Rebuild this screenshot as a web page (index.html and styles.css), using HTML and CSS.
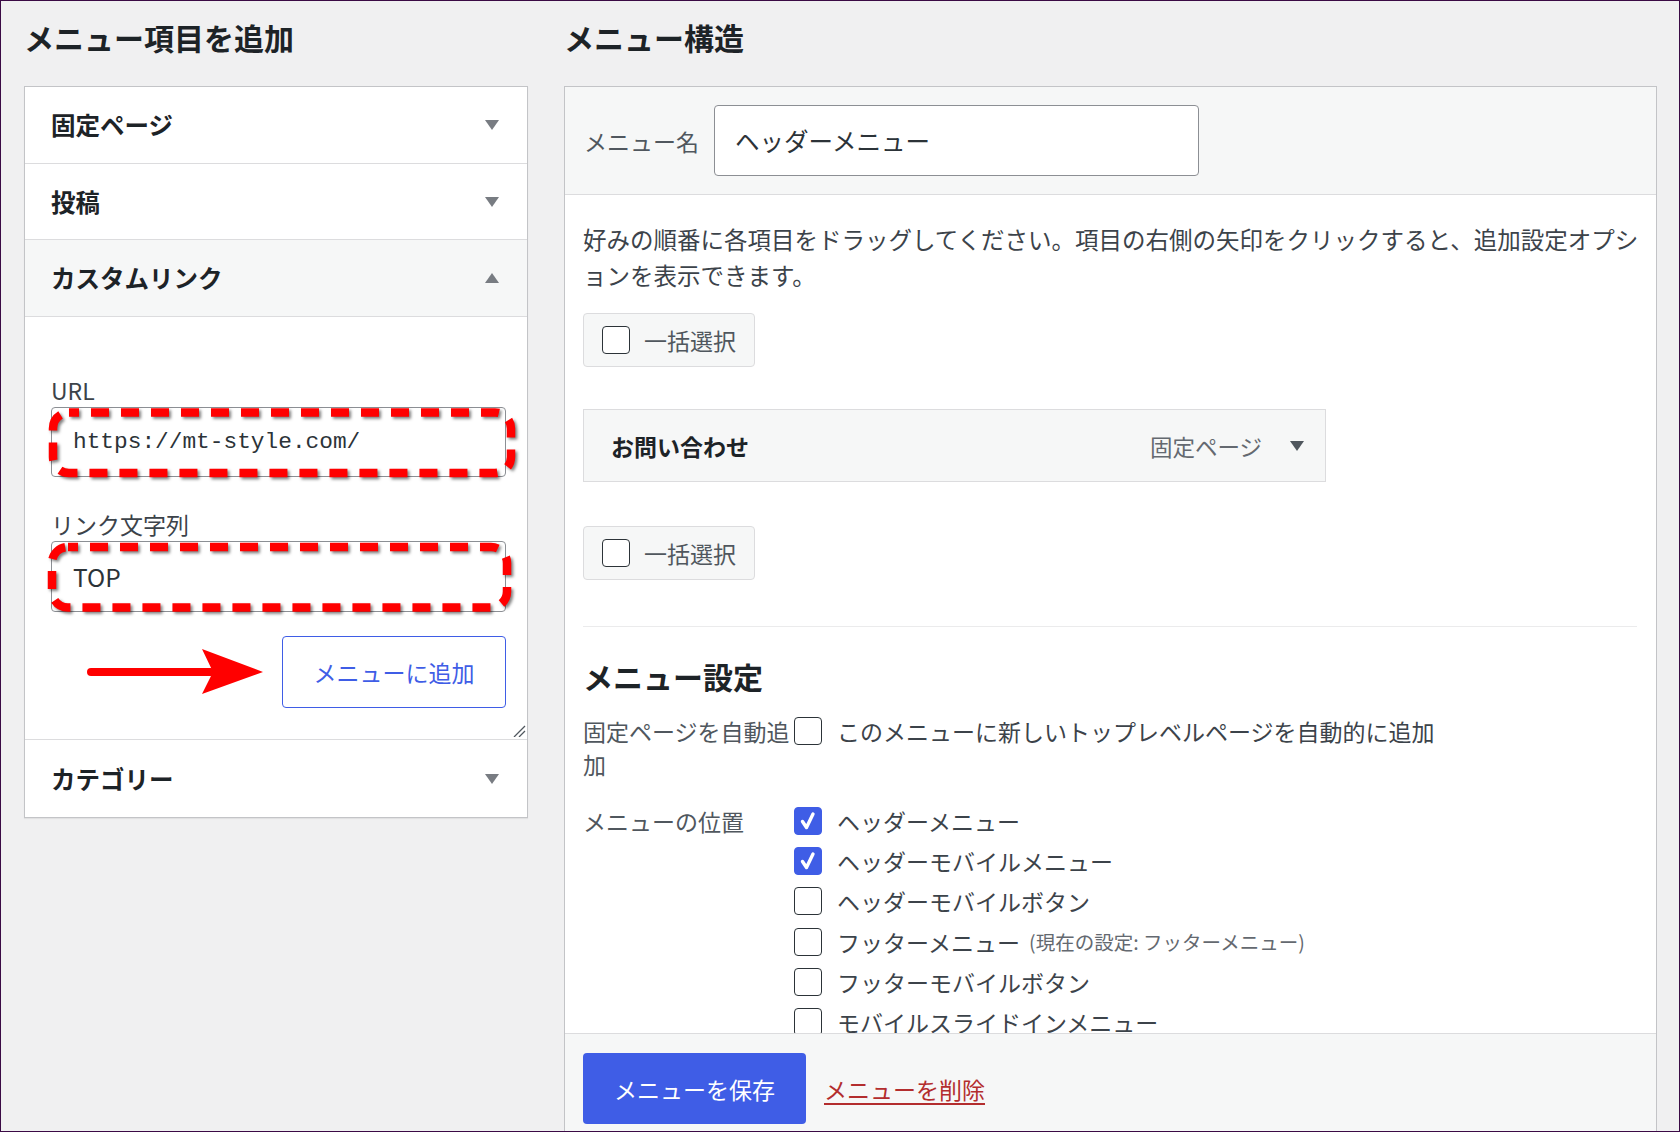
FILE: index.html
```html
<!DOCTYPE html>
<html lang="ja">
<head>
<meta charset="utf-8">
<title>メニュー</title>
<link rel="stylesheet" href="styles.css">
</head>
<body>
<div class="screen">
  <section class="col">
    <h2 class="col-title">メニュー項目を追加</h2>
    <div class="accordion">
      <div class="acc-row r1"><h3>固定ページ</h3><svg class="tri" width="14" height="10" viewBox="0 0 14 10"><path d="M0 0H14L7 10Z"/></svg></div>
      <div class="acc-row r2"><h3>投稿</h3><svg class="tri" width="14" height="10" viewBox="0 0 14 10"><path d="M0 0H14L7 10Z"/></svg></div>
      <div class="acc-row r3 open"><h3>カスタムリンク</h3><svg class="tri" width="14" height="10" viewBox="0 0 14 10"><path d="M0 10H14L7 0Z"/></svg></div>
      <div class="acc-body">
        <div class="field-label">URL</div>
        <div class="field mono">https://mt-style.com/
          <svg class="mark mark-url" width="472" height="80" viewBox="0 0 472 80"><rect x="5" y="5.5" width="458" height="60.5" rx="16" ry="16"/></svg>
        </div>
        <div class="field-label gap">リンク文字列</div>
        <div class="field tall">TOP
          <svg class="mark mark-top" width="472" height="80" viewBox="0 0 472 80"><rect x="4" y="6" width="455" height="60.5" rx="16" ry="16"/></svg>
        </div>
        <div class="add-row">
          <svg class="arrow" width="180" height="46" viewBox="0 0 180 46"><line x1="6" y1="23" x2="126" y2="23"/><path d="M117 0L178 23L117 45L128 23Z"/></svg>
          <div class="add-btn">メニューに追加</div>
        </div>
        <svg class="grip" width="14" height="12" viewBox="0 0 14 12"><path d="M13 1L2 12M13 6L7 12"/></svg>
      </div>
      <div class="acc-row r4"><h3>カテゴリー</h3><svg class="tri" width="14" height="10" viewBox="0 0 14 10"><path d="M0 0H14L7 10Z"/></svg></div>
    </div>
  </section>

  <section class="col">
    <h2 class="col-title">メニュー構造</h2>
    <div class="menu-panel">
      <div class="menu-head">
        <span class="name-label">メニュー名</span>
        <div class="name-input">ヘッダーメニュー</div>
      </div>
      <div class="menu-body">
        <p class="desc"><span class="nw">好みの順番に各項目をドラッグしてください。項目の右側の矢印をクリックすると、追加設定オプシ</span><br>ョンを表示できます。</p>
        <div class="bulk"><span class="cb"></span>一括選択</div>
        <div class="menu-item">
          <span class="item-title">お問い合わせ</span>
          <span class="item-type">固定ページ</span>
          <svg class="tri dark" width="14" height="10" viewBox="0 0 14 10"><path d="M0 0H14L7 10Z"/></svg>
        </div>
        <div class="bulk second"><span class="cb"></span>一括選択</div>
        <div class="sep"></div>
        <h3 class="settings-title">メニュー設定</h3>
        <div class="setting-row">
          <div class="set-label">固定ページを自動追加</div>
          <div class="options">
            <div class="opt"><span class="cb"></span>このメニューに新しいトップレベルページを自動的に追加</div>
          </div>
        </div>
        <div class="setting-row loc">
          <div class="set-label">メニューの位置</div>
          <div class="options">
            <div class="opt"><span class="cb checked"><svg width="26" height="26" viewBox="0 0 26 26"><path d="M7.5 13.5L11.5 19.5L18 6"/></svg></span>ヘッダーメニュー</div>
            <div class="opt"><span class="cb checked"><svg width="26" height="26" viewBox="0 0 26 26"><path d="M7.5 13.5L11.5 19.5L18 6"/></svg></span>ヘッダーモバイルメニュー</div>
            <div class="opt"><span class="cb"></span>ヘッダーモバイルボタン</div>
            <div class="opt"><span class="cb"></span>フッターメニュー<span class="current">(現在の設定: フッターメニュー)</span></div>
            <div class="opt"><span class="cb"></span>フッターモバイルボタン</div>
            <div class="opt"><span class="cb"></span>モバイルスライドインメニュー</div>
          </div>
        </div>
      </div>
      <div class="menu-foot">
        <div class="save-btn">メニューを保存</div>
        <a class="del-link" href="#">メニューを削除</a>
      </div>
    </div>
  </section>
</div>
</body>
</html>
```
FILE: styles.css
```css
* { box-sizing: border-box; }
html, body { margin: 0; padding: 0; }
body {
  width: 1680px;
  height: 1132px;
  overflow: hidden;
  font-family: "Noto Sans CJK JP", "Noto Sans", sans-serif;
  color: #3c434a;
}
.screen {
  width: 1680px;
  height: 1132px;
  border: 1px solid #3b0a45;
  background: #f0f0f1;
  overflow: hidden;
  display: grid;
  grid-template-columns: 504px 1093px;
  column-gap: 36px;
  align-items: start;
  padding: 16px 0 0 23px;
}
.col-title {
  margin: 0 0 29px;
  font-size: 30px;
  line-height: 40px;
  font-weight: 700;
  color: #1d2327;
}

/* left accordion */
.accordion {
  background: #fff;
  border: 1px solid #c3c4c7;
  box-shadow: 0 1px 1px rgba(0,0,0,.06);
}
.acc-row {
  display: flex;
  align-items: center;
  justify-content: space-between;
  padding: 0 28px 0 26px;
  border-bottom: 1px solid #dcdcde;
}
.acc-row.r1 { height: 77px; }
.acc-row.r2 { height: 76px; }
.acc-row.r3 { height: 77px; }
.acc-row.r4 { height: 77px; border-bottom: 0; }
.acc-row.open { background: #f6f7f7; }
.acc-row h3 {
  margin: 0;
  font-size: 24.5px;
  line-height: 34px;
  font-weight: 700;
  color: #1d2327;
}
.tri { fill: #787c82; flex: none; }
.tri.dark { fill: #50575e; }

.acc-body {
  position: relative;
  padding: 56px 21px 31px 26px;
  border-bottom: 1px solid #dcdcde;
}
.field-label {
  font-size: 23px;
  line-height: 34px;
  color: #3c434a;
}
.field-label.gap { margin-top: 30px; }
.field {
  position: relative;
  height: 70px;
  border: 1px solid #8c8f94;
  border-radius: 4px;
  background: #fff;
  display: flex;
  align-items: center;
  padding-left: 21px;
  font-size: 24.5px;
  color: #2c3338;
}
.field.tall { height: 71px; }
.field.mono {
  font-family: "Liberation Mono", "DejaVu Sans Mono", monospace;
  font-size: 22.8px;
}
.mark {
  position: absolute;
  left: -4px;
  top: -1px;
  overflow: visible;
}
.mark rect {
  fill: none;
  stroke: #ff0000;
  stroke-width: 8.5;
  stroke-dasharray: 18 12;
  stroke-dashoffset: 8;
  filter: drop-shadow(2px 2px 1.5px rgba(0,0,0,.5));
}
.add-row {
  display: flex;
  justify-content: flex-end;
  align-items: center;
  gap: 17px;
  margin-top: 24px;
}
.arrow line { stroke: #ff0000; stroke-width: 8; stroke-linecap: round; }
.arrow path { fill: #ff0000; }
.add-btn {
  width: 224px;
  height: 72px;
  border: 1px solid #3f5de6;
  border-radius: 4px;
  background: #fff;
  color: #3f5de6;
  font-size: 23px;
  display: flex;
  align-items: center;
  justify-content: center;
}
.grip {
  position: absolute;
  right: 1px;
  bottom: 2px;
}
.grip path { stroke: #50575e; stroke-width: 1.3; fill: none; }

/* right panel */
.menu-panel {
  background: #fff;
  border: 1px solid #c3c4c7;
}
.menu-head {
  background: #f6f7f7;
  border-bottom: 1px solid #dcdcde;
  padding: 18px 0 18px 19px;
  display: flex;
  align-items: center;
  gap: 15px;
}
.name-label {
  font-size: 23px;
  line-height: 34px;
  color: #50575e;
}
.name-input {
  width: 485px;
  height: 71px;
  border: 1px solid #8c8f94;
  border-radius: 4px;
  background: #fff;
  display: flex;
  align-items: center;
  padding-left: 20px;
  font-size: 24.5px;
  color: #2c3338;
}
.menu-body {
  height: 838px;
  overflow: hidden;
  padding: 26px 17px 0 18px;
}
.desc {
  margin: 0;
  font-size: 23.5px;
  line-height: 36px;
  color: #3c434a;
}
.nw { white-space: nowrap; }
.bulk {
  display: flex;
  width: fit-content;
  align-items: center;
  gap: 14px;
  margin-top: 20px;
  padding: 12px 18px;
  border: 1px solid #dcdcde;
  border-radius: 4px;
  background: #f6f7f7;
  font-size: 23px;
  line-height: 28px;
  color: #50575e;
}
.bulk.second { margin-top: 44px; }
.cb {
  width: 28px;
  height: 28px;
  flex: none;
  border: 1px solid #2c3338;
  border-radius: 4px;
  background: #fff;
  display: flex;
  align-items: center;
  justify-content: center;
}
.cb.checked {
  background: #3f5de6;
  border-color: #3f5de6;
}
.cb.checked path {
  fill: none;
  stroke: #fff;
  stroke-width: 3.4;
  stroke-linecap: round;
  stroke-linejoin: round;
}
.menu-item {
  width: 743px;
  height: 73px;
  margin-top: 42px;
  display: flex;
  align-items: center;
  padding: 0 21px 0 27px;
  background: #f6f7f7;
  border: 1px solid #dcdcde;
}
.item-title {
  flex: 1;
  font-size: 23px;
  font-weight: 700;
  color: #1d2327;
}
.item-type {
  font-size: 22.5px;
  color: #646970;
  margin-right: 28px;
}
.sep {
  margin-top: 46px;
  border-top: 1px solid #ebebec;
  margin-right: 2px;
}
.settings-title {
  margin: 28px 0 0;
  font-size: 30px;
  line-height: 42px;
  font-weight: 700;
  color: #1d2327;
}
.setting-row {
  display: grid;
  grid-template-columns: 211px 1fr;
  margin-top: 17.5px;
}
.setting-row.loc { margin-top: 20px; }
.set-label {
  font-size: 23px;
  line-height: 33px;
  color: #50575e;
}
.setting-row.loc .set-label { line-height: 40px; }
.opt {
  display: flex;
  align-items: center;
  gap: 15px;
  height: 33px;
  font-size: 23px;
  color: #3c434a;
}
.setting-row.loc .opt { height: 40.3px; }
.current {
  margin-left: -6px;
  font-size: 19.5px;
  color: #646970;
}
.menu-foot {
  border-top: 1px solid #dcdcde;
  background: #f6f7f7;
  padding: 19px 18px;
  display: flex;
  align-items: center;
  gap: 18px;
}
.save-btn {
  height: 71px;
  padding: 0 31px;
  border-radius: 4px;
  background: #3f5de6;
  color: #fff;
  font-size: 23px;
  display: flex;
  align-items: center;
}
.del-link {
  font-size: 23px;
  color: #b32d2e;
  text-decoration: underline;
  text-decoration-thickness: 2px;
  text-underline-offset: 4px;
}
```
